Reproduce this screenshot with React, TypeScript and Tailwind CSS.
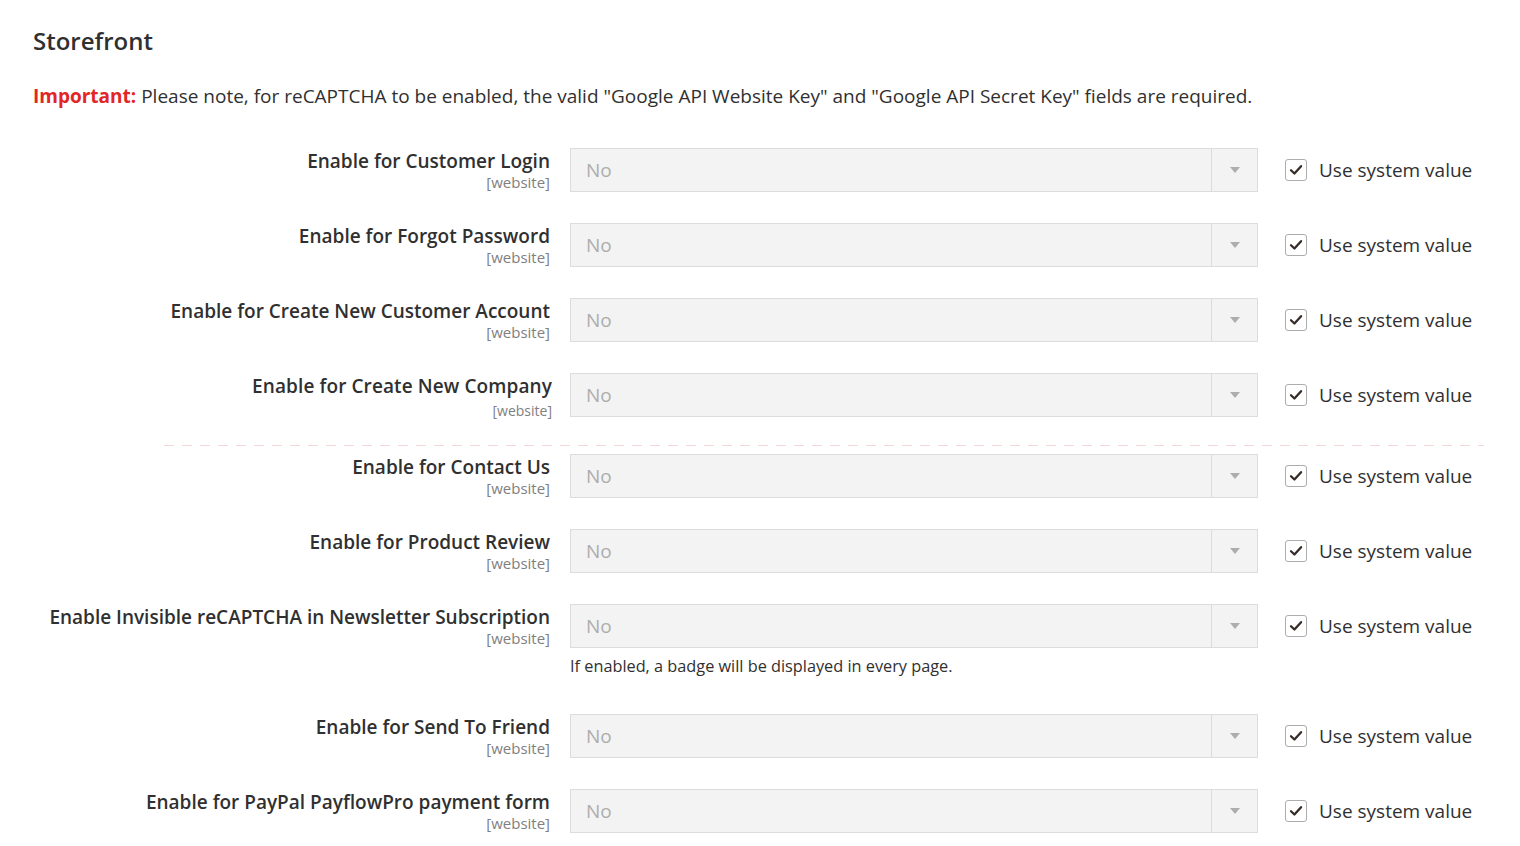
import React from 'react';

type Row = {
  label: string;
  note?: string;
  wide?: boolean;
};

const groupOne: Row[] = [
  { label: 'Enable for Customer Login' },
  { label: 'Enable for Forgot Password' },
  { label: 'Enable for Create New Customer Account' },
  { label: 'Enable for Create New Company', wide: true },
];

const groupTwo: Row[] = [
  { label: 'Enable for Contact Us' },
  { label: 'Enable for Product Review' },
  {
    label: 'Enable Invisible reCAPTCHA in Newsletter Subscription',
    note: 'If enabled, a badge will be displayed in every page.',
  },
  { label: 'Enable for Send To Friend' },
  { label: 'Enable for PayPal PayflowPro payment form' },
];

const CheckIcon: React.FC = () => (
  <svg viewBox="0 0 16 16" className="h-[14px] w-[14px]">
    <path d="M2.3 8.3 L6.2 12 L13.8 3.6" fill="none" stroke="#352b27" strokeWidth="2.6" strokeLinecap="round" strokeLinejoin="round" />
  </svg>
);

const ConfigRow: React.FC<{ row: Row }> = ({ row }) => (
  <div className="flex items-start">
    <div className="w-[550px] shrink-0 text-right">
      {row.wide ? (
        <div className="mr-[-2px]">
          <div className="pt-[1px] text-[19px] font-semibold leading-[24px] tracking-[0.1px] text-[#303030]">{row.label}</div>
          <div className="mt-[5px] text-[14px] leading-[16px] text-[#808080]">[website]</div>
        </div>
      ) : (
        <div>
          <div className="pt-[1px] text-[19px] font-semibold leading-[24px] text-[#303030]">{row.label}</div>
          <div className="mt-[1px] text-[15px] leading-[16px] text-[#808080]">[website]</div>
        </div>
      )}
    </div>
    <div className="ml-[20px] w-[688px] shrink-0">
      <div className="flex h-[44px] border border-[#dcdcdc] bg-[#f3f3f3]">
        <div className="flex flex-1 items-center pl-[15px] text-[19px] text-[#adadad]">No</div>
        <div className="flex w-[46px] items-center justify-center border-l border-[#dcdcdc]">
          <div className="h-0 w-0 border-x-[5px] border-t-[6px] border-x-transparent border-t-[#adadad]" />
        </div>
      </div>
      {row.note && (
        <div className="mb-[6px] mt-[7px] text-[16.3px] leading-[22px] text-[#303030]">{row.note}</div>
      )}
    </div>
    <div className="ml-[27px] mt-[11px] flex items-center">
      <div className="flex h-[22px] w-[22px] items-center justify-center rounded-[3px] border border-[#adadad] bg-white">
        <CheckIcon />
      </div>
      <span className="ml-[12px] text-[19px] leading-[22px] text-[#303030]">Use system value</span>
    </div>
  </div>
);

export default function App() {
  return (
    <div className="min-h-screen bg-white pt-[27px]" style={{ fontFamily: '"Open Sans", "Noto Sans", sans-serif' }}>
      <h2 className="pl-[33px] text-[24px] font-semibold leading-[28px] text-[#303030]">Storefront</h2>
      <p className="mt-[29px] pl-[33px] text-[19px] leading-[24px] text-[#303030]">
        <span className="font-bold text-[#e22626]">Important:</span> Please note, for reCAPTCHA to be enabled, the valid
        "Google API Website Key" and "Google API Secret Key" fields are required.
      </p>
      <div className="mt-[40px] flex flex-col gap-[31px]">
        {groupOne.map((row) => (
          <ConfigRow key={row.label} row={row} />
        ))}
      </div>
      {/* dashed divider between groups */}
      <div className="ml-[164px] mr-[36px] mt-[26px] h-px bg-[repeating-linear-gradient(to_right,#f4d8d8_0_10px,transparent_10px_18px)]" />
      <div className="mt-[8px] flex flex-col gap-[31px]">
        {groupTwo.map((row) => (
          <ConfigRow key={row.label} row={row} />
        ))}
      </div>
    </div>
  );
}
